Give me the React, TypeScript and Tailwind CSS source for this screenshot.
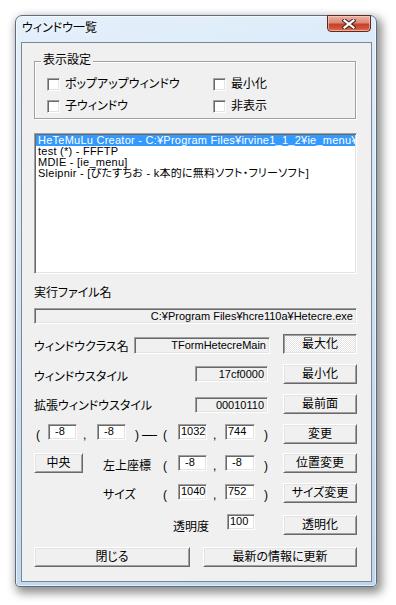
import type { ReactNode } from 'react';

const FONT = "font-['Liberation_Sans','Noto_Sans_CJK_JP',sans-serif] [font-feature-settings:'palt']";

// classic 3D edges
const raised =
  'border border-t-white border-l-white border-r-[#696969] border-b-[#696969] shadow-[inset_1px_1px_0_#e3e3e3,inset_-1px_-1px_0_#a0a0a0] bg-[#f0f0f0]';
const pushed =
  'border border-t-[#696969] border-l-[#696969] border-r-white border-b-white shadow-[inset_1px_1px_0_#a0a0a0,inset_-1px_-1px_0_#e3e3e3] bg-[conic-gradient(#ffffff_25%,#e4e4e4_0_50%,#ffffff_0_75%,#e4e4e4_0)] bg-[length:2px_2px]';
const sunken =
  'border border-t-[#a0a0a0] border-l-[#a0a0a0] border-r-white border-b-white shadow-[inset_1px_1px_0_#696969,inset_-1px_-1px_0_#e3e3e3]';

function cx(...c: (string | false | undefined)[]) {
  return c.filter(Boolean).join(' ');
}

function Button({ children, className, down }: { children: ReactNode; className?: string; down?: boolean }) {
  return (
    <div
      className={cx(
        down ? pushed : raised,
        'flex h-[20px] shrink-0 items-center justify-center text-[12px] leading-[14px] text-black',
        className,
      )}
    >
      {children}
    </div>
  );
}

function NumBox({ value, className }: { value: string; className?: string }) {
  return (
    <div className={cx(sunken, 'h-[16px] shrink-0 bg-white pl-[2px] text-[11px] leading-[13px]', className)}>
      {value}
    </div>
  );
}

function ReadBox({ value, className }: { value: string; className?: string }) {
  return (
    <div
      className={cx(
        sunken,
        'shrink-0 overflow-hidden whitespace-nowrap bg-[#f0f0f0] pr-[3px] text-right text-[11px] leading-[14px]',
        className,
      )}
    >
      {value}
    </div>
  );
}

function Check({ label, className }: { label: string; className?: string }) {
  return (
    <div className={cx('flex items-center', className)}>
      <div className={cx(sunken, 'h-[13px] w-[13px] shrink-0 bg-white')} />
      <span className="ml-[5px] text-[12px] leading-[14px]">{label}</span>
    </div>
  );
}

function T({ children, className }: { children: ReactNode; className?: string }) {
  return <span className={cx('shrink-0 text-[12px] leading-[14px] whitespace-nowrap', className)}>{children}</span>;
}

const items = [
  'HeTeMuLu Creator - C:¥Program Files¥irvine1_1_2¥ie_menu¥ie_menu.exe',
  'test (*) - FFFTP',
  'MDIE - [ie_menu]',
  'Sleipnir - [ぴたすちお - k本的に無料ソフト・フリーソフト]',
];

export default function App() {
  return (
    <div className={cx(FONT, 'h-[605px] w-[396px] overflow-hidden bg-white pl-[15px] pt-[15px] text-black')}>
      {/* window frame */}
      <div className="flex h-[572px] w-[362px] flex-col rounded-t-[7px] rounded-b-[4px] border border-[#5f6d7b] bg-[linear-gradient(165deg,#e4f0fb_0%,#d6e7f7_35%,#c6dcf1_70%,#bdd6ef_100%)] px-[5px] pb-[4px] shadow-[3px_4px_10px_2px_rgba(0,0,0,0.45),inset_0_0_0_1px_rgba(255,255,255,0.6)]">
        {/* title bar */}
        <div className="flex h-[26px] shrink-0 items-start justify-between">
          <span className="ml-[1px] mt-[5px] text-[12px] leading-[14px] [text-shadow:0_0_6px_#ffffff]">ウィンドウ一覧</span>
          <div className="-mt-px flex h-[17px] w-[44px] items-center justify-center rounded-b-[4px] border border-[#5b2a22] bg-[linear-gradient(180deg,#eab1a3_0%,#dd8a76_45%,#c2412a_55%,#d4583c_85%,#e97a52_100%)] shadow-[inset_0_0_0_1px_rgba(255,220,210,0.55)]">
            <svg width="14" height="10" viewBox="0 0 14 10">
              <path d="M2.5 1.5 L11.5 8.5 M11.5 1.5 L2.5 8.5" stroke="#4b2a25" strokeWidth="4.2" strokeLinecap="square" />
              <path d="M2.5 1.5 L11.5 8.5 M11.5 1.5 L2.5 8.5" stroke="#ffffff" strokeWidth="2.2" strokeLinecap="square" />
            </svg>
          </div>
        </div>

        {/* client area */}
        <div className="flex h-[540px] w-[351px] shrink-0 flex-col border border-[#7b8794] bg-[#f0f0f0] pl-[12px]">
          {/* group box */}
          <div className="relative mt-[18px] h-[58px] w-[322px] border border-[#a0a0a0] shadow-[inset_1px_1px_0_#ffffff,1px_1px_0_#ffffff]">
            <span className="absolute left-[6px] top-[-9px] bg-[#f0f0f0] px-[2px] text-[12px] leading-[14px]">表示設定</span>
            <div className="ml-[12px] mt-[15px] flex">
              <Check label="ポップアップウィンドウ" className="w-[166px]" />
              <Check label="最小化" />
            </div>
            <div className="ml-[12px] mt-[8px] flex">
              <Check label="子ウィンドウ" className="w-[166px]" />
              <Check label="非表示" />
            </div>
          </div>

          {/* list box */}
          <div className={cx(sunken, 'mt-[14px] h-[141px] w-[323px] overflow-hidden bg-white px-px pt-px')}>
            {items.map((t, i) => (
              <div
                key={t}
                className={cx(
                  'h-[11px] overflow-hidden whitespace-nowrap pl-[2px] text-[11px] leading-[11px] tracking-[0.25px]',
                  i === 0 ? 'bg-[#3399ff] text-white' : 'text-black',
                )}
              >
                {t}
              </div>
            ))}
          </div>

          <T className="mt-[12px]">実行ファイル名</T>
          <ReadBox value="C:¥Program Files¥hcre110a¥Hetecre.exe" className="mt-[8px] h-[16px] w-[323px]" />

          {/* class name */}
          <div className="mt-[10px] flex h-[20px] items-start">
            <T className="mt-[6px] w-[100px]">ウィンドウクラス名</T>
            <ReadBox value="TFormHetecreMain" className="mt-[3px] h-[17px] w-[136px]" />
            <Button down className="ml-[13px] w-[74px]">最大化</Button>
          </div>

          {/* style */}
          <div className="mt-[10px] flex h-[20px] items-start">
            <T className="mt-[6px] w-[161px]">ウィンドウスタイル</T>
            <ReadBox value="17cf0000" className="mt-[2px] h-[16px] w-[73px]" />
            <Button className="ml-[15px] w-[74px]">最小化</Button>
          </div>

          {/* ex style */}
          <div className="mt-[10px] flex h-[20px] items-start">
            <T className="mt-[5px] w-[161px]">拡張ウィンドウスタイル</T>
            <ReadBox value="00010110" className="mt-[3px] h-[16px] w-[73px]" />
            <Button className="ml-[15px] w-[74px]">最前面</Button>
          </div>

          {/* rect */}
          <div className="mt-[10px] flex h-[20px] items-start">
            <T className="mt-[4px] w-[14px] pl-[2px]">(</T>
            <NumBox value="-8" className="w-[29px] pl-[6px]" />
            <T className="mt-[4px] w-[20px] pl-[6px]">,</T>
            <NumBox value="-8" className="w-[29px] pl-[6px]" />
            <T className="mt-[4px] w-[16px] pl-[9px]">)</T>
            <T className="mt-[3px] w-[18px] text-[15px]">—</T>
            <T className="mt-[4px] w-[18px] pl-[3px]">(</T>
            <NumBox value="1032" className="w-[29px]" />
            <T className="mt-[4px] w-[18px] pl-[6px]">,</T>
            <NumBox value="744" className="w-[30px]" />
            <T className="mt-[4px] w-[28px] pl-[9px]">)</T>
            <Button className="w-[74px]">変更</Button>
          </div>

          {/* position */}
          <div className="mt-[9px] flex h-[20px] items-start">
            <Button className="w-[49px]">中央</Button>
            <T className="mt-[6px] w-[80px] pl-[20px]">左上座標</T>
            <T className="mt-[6px] w-[15px]">(</T>
            <NumBox value="-8" className="mt-[2px] h-[15px] w-[29px] pl-[6px]" />
            <T className="mt-[6px] w-[18px] pl-[6px]">,</T>
            <NumBox value="-8" className="mt-[2px] h-[15px] w-[30px] pl-[6px]" />
            <T className="mt-[6px] w-[28px] pl-[9px]">)</T>
            <Button className="w-[74px]">位置変更</Button>
          </div>

          {/* size */}
          <div className="mt-[10px] flex h-[20px] items-start">
            <T className="mt-[5px] w-[129px] pl-[69px]">サイズ</T>
            <T className="mt-[5px] w-[15px]">(</T>
            <NumBox value="1040" className="mt-px w-[29px]" />
            <T className="mt-[5px] w-[18px] pl-[6px]">,</T>
            <NumBox value="752" className="mt-px w-[30px]" />
            <T className="mt-[5px] w-[28px] pl-[9px]">)</T>
            <Button className="w-[74px]">サイズ変更</Button>
          </div>

          {/* alpha */}
          <div className="mt-[11px] flex h-[21px] items-start">
            <T className="mt-[6px] w-[193px] pl-[139px]">透明度</T>
            <NumBox value="100" className="w-[28px]" />
            <Button className="ml-[28px] mt-px w-[74px]">透明化</Button>
          </div>

          {/* bottom */}
          <div className="mt-[12px] flex">
            <Button className="w-[156px]">閉じる</Button>
            <Button className="ml-[13px] w-[154px]">最新の情報に更新</Button>
          </div>
        </div>
      </div>
    </div>
  );
}
